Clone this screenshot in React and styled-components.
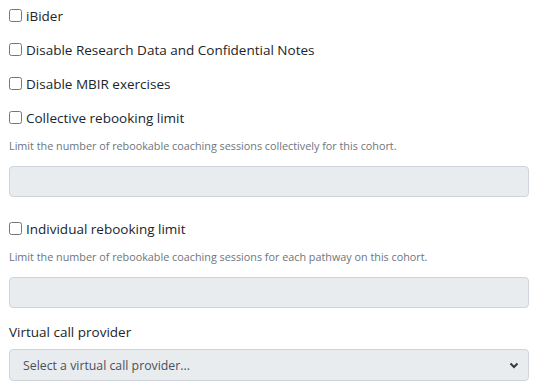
import React from 'react'
import styled, { createGlobalStyle } from 'styled-components'

const GlobalStyle = createGlobalStyle`
  body {
    margin: 0;
    background: #fff;
    font-family: "Open Sans", "Noto Sans", sans-serif;
    color: #212529;
  }
`

const Form = styled.div`
  padding: 5px 10px 0 9px;
  display: flex;
  flex-direction: column;
`

const CheckRow = styled.label`
  display: flex;
  align-items: center;
  height: 21px;
  margin-bottom: ${p => p.gap || 13}px;
  font-size: 13.5px;
  color: #212529;
`

const Box = styled.input`
  width: 13px;
  height: 13px;
  margin: 0 4px 0 0;
`

const Help = styled.div`
  font-size: 10.8px;
  line-height: 16px;
  color: #6c757d;
  margin-bottom: 12px;
`

const Field = styled.div`
  height: 31px;
  box-sizing: border-box;
  background: #e9ecef;
  border: 1px solid #ced4da;
  border-radius: 4px;
  margin-bottom: ${p => p.gap || 0}px;
`

const Label = styled.div`
  font-size: 13.5px;
  line-height: 20px;
  margin-bottom: 7px;
`

const Select = styled.div`
  height: 32px;
  box-sizing: border-box;
  background: #e9ecef;
  border: 1px solid #ced4da;
  border-radius: 4px;
  display: flex;
  align-items: center;
  justify-content: space-between;
  padding: 0 9px 0 13px;
  font-size: 12.3px;
  color: #495057;
`

const Chevron = () => (
  <svg width="10" height="8" viewBox="0 0 10 8">
    <path d="M1.5 2.5 L5 6 L8.5 2.5" fill="none" stroke="#343a40" strokeWidth="2" />
  </svg>
)

export default function App() {
  return (
    <>
      <GlobalStyle />
      <Form>
        <CheckRow><Box type="checkbox" />iBider</CheckRow>
        <CheckRow><Box type="checkbox" />Disable Research Data and Confidential Notes</CheckRow>
        <CheckRow><Box type="checkbox" />Disable MBIR exercises</CheckRow>
        <CheckRow gap={10}><Box type="checkbox" />Collective rebooking limit</CheckRow>
        <Help>Limit the number of rebookable coaching sessions collectively for this cohort.</Help>
        <Field gap={21} />
        <CheckRow gap={10}><Box type="checkbox" />Individual rebooking limit</CheckRow>
        <Help>Limit the number of rebookable coaching sessions for each pathway on this cohort.</Help>
        <Field gap={14} />
        <Label>Virtual call provider</Label>
        <Select>
          <span>Select a virtual call provider...</span>
          <Chevron />
        </Select>
      </Form>
    </>
  )
}
